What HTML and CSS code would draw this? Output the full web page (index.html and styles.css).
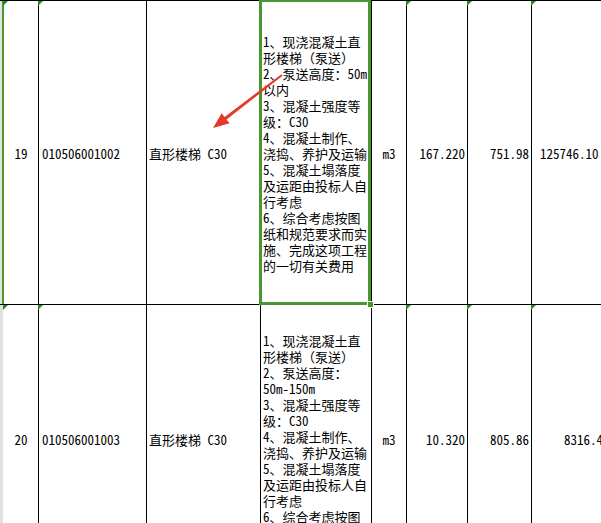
FILE: index.html
```html
<!DOCTYPE html>
<html lang="zh-CN">
<head>
<meta charset="utf-8">
<title>清单</title>
<link rel="stylesheet" href="styles.css">
</head>
<body>
<div class="sheet">
  <div class="row row-a">
    <div class="strip strip-active"></div>
    <div class="cell c-num flag">19</div>
    <div class="cell c-code flag">010506001002</div>
    <div class="cell c-name">直形楼梯 C30</div>
    <div class="cell c-desc selected">
      <div class="desc">1、现浇混凝土直<br>形楼梯（泵送）<br>2、泵送高度：50m<br>以内<br>3、混凝土强度等<br>级：C30<br>4、混凝土制作、<br>浇捣、养护及运输<br>5、混凝土塌落度<br>及运距由投标人自<br>行考虑<br>6、综合考虑按图<br>纸和规范要求而实<br>施、完成这项工程<br>的一切有关费用</div>
      <span class="handle"></span>
    </div>
    <div class="cell c-unit">m3</div>
    <div class="cell c-qty flag">167.220</div>
    <div class="cell c-price flag">751.98</div>
    <div class="cell c-total flag">125746.10</div>
  </div>
  <div class="row row-b">
    <div class="strip"></div>
    <div class="cell c-num flag">20</div>
    <div class="cell c-code flag">010506001003</div>
    <div class="cell c-name">直形楼梯 C30</div>
    <div class="cell c-desc c-desc-top">
      <div class="desc">1、现浇混凝土直<br>形楼梯（泵送）<br>2、泵送高度：<br>50m-150m<br>3、混凝土强度等<br>级：C30<br>4、混凝土制作、<br>浇捣、养护及运输<br>5、混凝土塌落度<br>及运距由投标人自<br>行考虑<br>6、综合考虑按图<br>纸和规范要求而实<br>施、完成这项工程<br>的一切有关费用</div>
    </div>
    <div class="cell c-unit">m3</div>
    <div class="cell c-qty flag">10.320</div>
    <div class="cell c-price flag">805.86</div>
    <div class="cell c-total c-total-short flag">8316.48</div>
  </div>
</div>
<svg class="arrow" width="601" height="523" viewBox="0 0 601 523">
  <polygon points="282.6,75.7 281.4,74.3 224.6,116.9 221.6,113.2 213,128 229.6,123.3 226.6,119.6" fill="#e8382c"/>
</svg>
</body>
</html>
```
FILE: styles.css
```css
html, body {
  margin: 0;
  padding: 0;
  background: #ffffff;
  overflow: hidden;
}

body {
  width: 601px;
  height: 523px;
  position: relative;
  font-family: "Noto Sans Mono CJK SC", "Noto Sans CJK SC", sans-serif;
  font-size: 13px;
  color: #000000;
}

.sheet {
  border-top: 1px solid #000000;
  width: 700px;
}

.row {
  display: grid;
  grid-template-columns: 4px 35px 108px 114px 111px 35px 61px 64px 168px;
  box-sizing: border-box;
  border-bottom: 1px solid #000000;
}

.row-a {
  height: 304px;
}

.row-b {
  height: 264px;
}

.strip {
  background: #e1e1e1;
  border-right: 1px solid #ffffff;
  box-sizing: border-box;
}

.strip-active {
  border-right: 2px solid #4a962f;
}

.cell {
  position: relative;
  box-sizing: border-box;
  border-right: 1px solid #000000;
  display: flex;
  align-items: center;
  white-space: nowrap;
  line-height: 16px;
  padding-top: 2px;
}

.c-num {
  justify-content: center;
}

.c-code {
  padding-left: 3px;
}

.c-name {
  padding-left: 2px;
}

.c-desc {
  padding-left: 2px;
}

.c-desc-top {
  align-items: flex-start;
  padding-top: 28px;
}

.desc {
  line-height: 16px;
}

.c-unit {
  justify-content: center;
}

.c-qty,
.c-price {
  justify-content: flex-end;
  padding-right: 2px;
}

.c-total {
  padding-left: 8px;
  border-right: none;
}

.c-total-short {
  padding-left: 32px;
}

.flag::before {
  content: "";
  position: absolute;
  left: -1px;
  top: 0;
  width: 0;
  height: 0;
  border-top: 5px solid #1f8f1f;
  border-right: 5px solid transparent;
}

.selected::after {
  content: "";
  position: absolute;
  left: -2px;
  top: -2px;
  right: 0;
  bottom: -1px;
  border: 3px solid #4a962f;
  z-index: 2;
  pointer-events: none;
}

.handle {
  position: absolute;
  left: 106px;
  top: 300px;
  width: 5px;
  height: 5px;
  background: #4a962f;
  border: 1px solid #ffffff;
  z-index: 3;
}

.arrow {
  position: absolute;
  left: 0;
  top: 0;
  z-index: 5;
  pointer-events: none;
}
```
